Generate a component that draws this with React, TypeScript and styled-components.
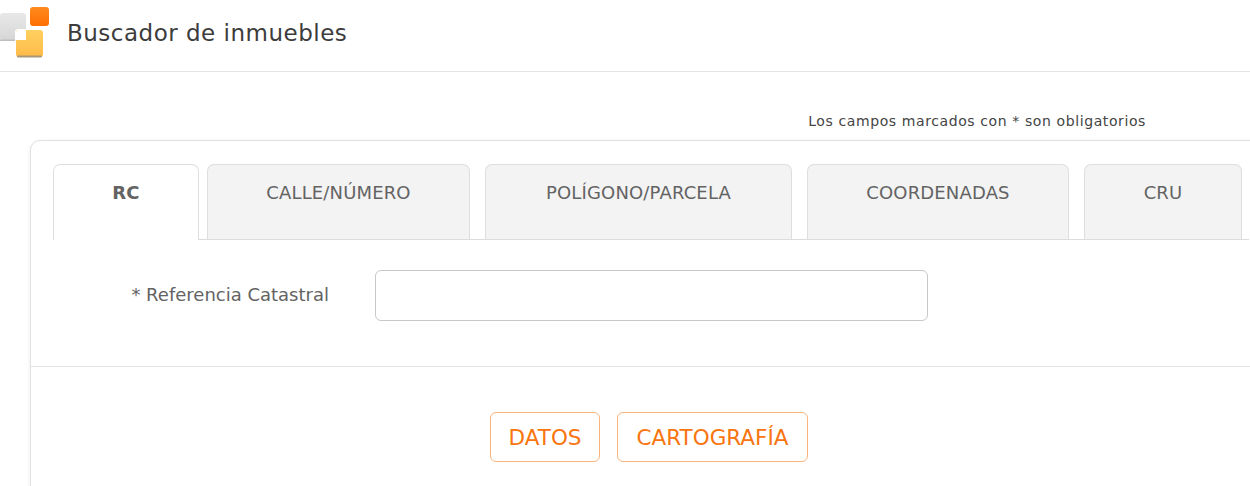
import React from "react";
import styled, { createGlobalStyle } from "styled-components";

const GlobalStyle = createGlobalStyle`
  html, body {
    margin: 0;
    padding: 0;
    background: #fff;
    overflow: hidden;
  }
  body {
    font-family: "DejaVu Sans", sans-serif;
  }
`;

const Page = styled.div`
  width: 1250px;
  height: 486px;
  overflow: hidden;
`;

const Header = styled.header`
  height: 71px;
  display: flex;
  align-items: flex-start;
  border-bottom: 1px solid #e3e3e3;
`;

const Logo = styled.svg`
  width: 50px;
  height: 60px;
  flex: none;
`;

const Title = styled.h1`
  margin: 19px 0 0 17px;
  font-size: 23px;
  line-height: 28px;
  font-weight: 400;
  letter-spacing: 0.5px;
  color: #3c3c3c;
`;

const Note = styled.p`
  margin: 40px 104px 10px 0;
  font-size: 14px;
  line-height: 18px;
  letter-spacing: 0.6px;
  color: #444;
  text-align: right;
`;

const Card = styled.section`
  width: 1240px;
  height: 360px;
  margin-left: 30px;
  border: 1px solid #e2e2e2;
  border-radius: 10px;
  box-shadow: 0 1px 4px rgba(0, 0, 0, 0.08);
  background: #fff;
`;

const Tabs = styled.div`
  display: flex;
  height: 75px;
  margin: 23px 0 0 22px;
  width: 1196px;
  border-bottom: 1px solid #dcdcdc;
`;

const Tab = styled.div<{ $active?: boolean; $width: number; $gap: number }>`
  box-sizing: border-box;
  width: ${(p) => p.$width}px;
  height: ${(p) => (p.$active ? 76 : 75)}px;
  margin-right: ${(p) => p.$gap}px;
  padding-top: 17px;
  border: 1px solid #dedede;
  border-bottom: none;
  border-radius: 7px 7px 0 0;
  background: ${(p) => (p.$active ? "#fff" : "#f3f3f3")};
  color: #636363;
  font-size: 18px;
  line-height: 22px;
  letter-spacing: 0.15px;
  font-weight: ${(p) => (p.$active ? 700 : 400)};
  text-align: center;
`;

const Field = styled.div`
  display: flex;
  align-items: center;
  height: 126px;
  border-bottom: 1px solid #e4e4e4;
`;

const Label = styled.label`
  width: 298px;
  flex: none;
  text-align: right;
  font-size: 18px;
  color: #636363;
  margin-bottom: 17px;
`;

const Input = styled.input`
  box-sizing: border-box;
  width: 553px;
  height: 51px;
  margin-left: 46px;
  margin-bottom: 15px;
  border: 1px solid #c8c8c8;
  border-radius: 6px;
  background: #fff;
  outline: none;
`;

const Actions = styled.div`
  display: flex;
  gap: 17px;
  padding: 45px 0 0 459px;
`;

const Button = styled.button<{ $width: number }>`
  box-sizing: border-box;
  width: ${(p) => p.$width}px;
  height: 50px;
  padding: 0;
  border: 1px solid #fbb57c;
  border-radius: 6px;
  background: #fff;
  color: #f8750f;
  font-family: "DejaVu Sans", sans-serif;
  font-size: 21.5px;
`;

function LogoMark() {
  return (
    <Logo viewBox="0 0 50 60">
      <defs>
        <linearGradient id="grey" x1="0" y1="0" x2="0" y2="1">
          <stop offset="0" stopColor="#e8e8e8" />
          <stop offset="1" stopColor="#d6d6d6" />
        </linearGradient>
        <linearGradient id="amber" x1="0" y1="0" x2="0" y2="1">
          <stop offset="0" stopColor="#ffd060" />
          <stop offset="1" stopColor="#febb48" />
        </linearGradient>
        <linearGradient id="orange" x1="0" y1="0" x2="0" y2="1">
          <stop offset="0" stopColor="#ff8a1e" />
          <stop offset="1" stopColor="#fd6f02" />
        </linearGradient>
      </defs>
      <rect x="0" y="13" width="26" height="28" rx="3" fill="url(#grey)" />
      <rect x="0" y="39.5" width="26" height="1.5" rx="0.7" fill="#bdbdbd" />
      <rect x="15" y="29" width="29" height="29" rx="3" fill="#fff" />
      <rect x="16" y="30" width="27" height="27" rx="3" fill="url(#amber)" />
      <rect x="17" y="55.5" width="25" height="2" rx="1" fill="#a89878" />
      <path d="M16 33a3 3 0 0 1 3-3h7v10h-10z" fill="#fff" />
      <rect x="30" y="7" width="19" height="19" rx="3" fill="url(#orange)" />
    </Logo>
  );
}

const tabs = [
  { label: "RC", width: 146, gap: 8, active: true },
  { label: "CALLE/NÚMERO", width: 263, gap: 15 },
  { label: "POLÍGONO/PARCELA", width: 307, gap: 15 },
  { label: "COORDENADAS", width: 262, gap: 15 },
  { label: "CRU", width: 158, gap: 0 },
];

export default function App() {
  return (
    <Page>
      <GlobalStyle />
      <Header>
        <LogoMark />
        <Title>Buscador de inmuebles</Title>
      </Header>
      <Note>Los campos marcados con * son obligatorios</Note>
      <Card>
        <Tabs>
          {tabs.map((tab) => (
            <Tab key={tab.label} $active={tab.active} $width={tab.width} $gap={tab.gap}>
              {tab.label}
            </Tab>
          ))}
        </Tabs>
        <Field>
          <Label>* Referencia Catastral</Label>
          <Input type="text" />
        </Field>
        <Actions>
          <Button $width={110}>DATOS</Button>
          <Button $width={191}>CARTOGRAFÍA</Button>
        </Actions>
      </Card>
    </Page>
  );
}
